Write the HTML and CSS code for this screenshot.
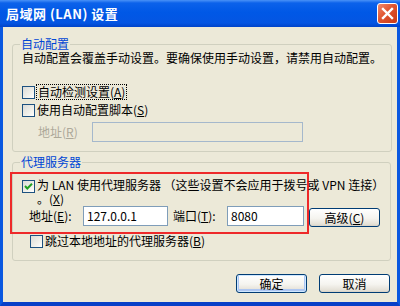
FILE: index.html
```html
<!DOCTYPE html>
<html lang="zh-CN">

<head>
    <meta charset="UTF-8">
    <title>局域网 (LAN) 设置</title>
    <link rel="stylesheet" href="styles.css">
</head>

<body>
    <div class="window">
        <div class="titlebar">
            <span class="title">局域网 (LAN) 设置</span>
            <span class="close">
                <svg width="13" height="13" viewBox="0 0 13 13">
                    <path d="M2 2 L11 11 M11 2 L2 11" stroke="#fff" stroke-width="2.4" stroke-linecap="square" />
                </svg>
            </span>
        </div>
        <div class="frame">
            <!-- 自动配置 -->
            <fieldset class="group">
                <legend>自动配置</legend>
                <p class="desc">自动配置会覆盖手动设置。要确保使用手动设置，请禁用自动配置。</p>
                <div class="check first"><span class="box"></span><span class="focus">自动检测设置(<u>A</u>)</span></div>
                <div class="check"><span class="box"></span><span class="text">使用自动配置脚本(<u>S</u>)</span></div>
                <div class="field script">
                    <span class="disabled">地址(<u>R</u>)</span>
                    <span class="input off"></span>
                </div>
            </fieldset>
            <!-- 代理服务器 -->
            <fieldset class="group proxy">
                <legend>代理服务器</legend>
                <div class="proxy_row">
                    <div class="mark">
                        <div class="check use">
                            <span class="box on">
                                <svg width="11" height="11" viewBox="0 0 11 11">
                                    <path d="M2 5 L4.3 7.5 L9 2.8" fill="none" stroke="#21a121" stroke-width="2" />
                                </svg>
                            </span>
                            <span class="text">为 LAN 使用代理服务器 （这些设置不会应用于拨号或 VPN 连接）<br>。(<u>X</u>)</span>
                        </div>
                        <div class="field">
                            <span class="lbl">地址(<u>E</u>):</span>
                            <span class="input addr">127.0.0.1</span>
                            <span class="lbl port_lbl">端口(<u>T</u>):</span>
                            <span class="input port">8080</span>
                        </div>
                    </div>
                    <span class="btn adv">高级(<u>C</u>)</span>
                </div>
                <div class="check bypass"><span class="box"></span><span class="text">跳过本地地址的代理服务器(<u>B</u>)</span></div>
            </fieldset>
            <div class="buttons">
                <span class="btn ok">确定</span>
                <span class="btn">取消</span>
            </div>
        </div>
    </div>
</body>

</html>
```

FILE: styles.css
```css
body,p,fieldset,legend {
    margin: 0;
    padding: 0;
}
body {
    font: 12px/14px "Noto Sans CJK SC", "DejaVu Sans", sans-serif;
    color: #000;
}
u {
    text-decoration: underline;
    text-underline-offset: 1px;
}
.window {
    width: 400px;
    height: 306px;
}
.titlebar {
    height: 27px;
    display: flex;
    align-items: center;
    justify-content: space-between;
    padding: 0 2px 0 6px;
    box-sizing: border-box;
    background: linear-gradient(#4a92f7 0, #0c62ea 3px, #0058e6 45%, #0455e2 85%, #0043c9 100%);
}
.title {
    color: #fff;
    font-size: 13px;
    font-weight: bold;
    letter-spacing: 0.5px;
}
.close {
    width: 19px;
    height: 19px;
    display: flex;
    align-items: center;
    justify-content: center;
    border: 1px solid #fff;
    border-radius: 3px;
    background: linear-gradient(135deg, #f08a6e 0, #e0542f 45%, #c93a16 100%);
}
.frame {
    height: 279px;
    box-sizing: border-box;
    background-color: #ece9d8;
    border-left: 3px solid #0a58e0;
    border-right: 3px solid #0a58e0;
    border-bottom: 4px solid #0840c8;
    display: flex;
    flex-direction: column;
}
.group {
    width: 379px;
    box-sizing: border-box;
    margin: 10px 0 0 9px;
    padding: 0 9px 9px 9px;
    border: 1px solid #d0d0bf;
    border-radius: 3px;
}
.group legend {
    color: #0046d5;
    margin-left: -2px;
    padding: 0 1px;
    line-height: 14px;
}
.desc {
    white-space: nowrap;
    height: 14px;
}
.proxy {
    margin-top: 3px;
    padding-bottom: 12px;
}
.check {
    display: flex;
    align-items: center;
    height: 18px;
}
.check.first {
    margin-top: 18px;
}
.box {
    width: 13px;
    height: 13px;
    box-sizing: border-box;
    border: 1px solid #1c5180;
    background: linear-gradient(135deg, #dcdcd7 0, #f0f0ea 60%, #fff 100%);
    margin-right: 2px;
    flex: none;
    display: flex;
    align-items: center;
    justify-content: center;
}
.focus {
    outline: 1px dotted #000;
    padding: 0 1px;
}
.field {
    display: flex;
    align-items: center;
    height: 20px;
}
.script {
    margin-top: 3px;
}
.disabled {
    color: #aca899;
    width: 54px;
    margin-left: 16px;
}
.input {
    height: 20px;
    box-sizing: border-box;
    border: 1px solid #7f9db9;
    background-color: #fff;
    padding-left: 3px;
    line-height: 18px;
}
.input.off {
    width: 211px;
    background-color: #ece9d8;
    border-color: #a5b8cc;
}
.proxy_row {
    display: flex;
    align-items: flex-end;
    margin: 3px 0 0 -12px;
}
.mark {
    width: 299px;
    box-sizing: border-box;
    border: 2px solid #ee2a2a;
    padding: 4px 0 6px 10px;
}
.check.use {
    height: 28px;
    align-items: flex-start;
    white-space: nowrap;
}
.check.use .box {
    margin-top: 2px;
}
.check.use .text {
    line-height: 14px;
}
.field .lbl {
    width: 54px;
    flex: none;
}
.mark .field {
    padding-left: 7px;
}
.addr {
    width: 85px;
}
.port_lbl {
    margin-left: 5px;
}
.port {
    width: 77px;
}
.btn {
    height: 19px;
    box-sizing: border-box;
    border: 1px solid #003c74;
    border-radius: 3px;
    background: linear-gradient(#fff 0, #f5f4ef 55%, #e4e0d6 90%, #d6d0c5 100%);
    display: flex;
    align-items: center;
    justify-content: center;
}
.adv {
    width: 71px;
    margin-bottom: 7px;
}
.check.bypass {
    height: 14px;
    margin-left: 8px;
}
.buttons {
    display: flex;
    justify-content: flex-end;
    gap: 12px;
    margin-top: 13px;
    padding-right: 7px;
}
.buttons .btn {
    width: 71px;
}
.ok {
    box-shadow: inset 0 0 0 1px #cee7ff, inset 0 -1px 0 2px #adc6f2;
}
```
